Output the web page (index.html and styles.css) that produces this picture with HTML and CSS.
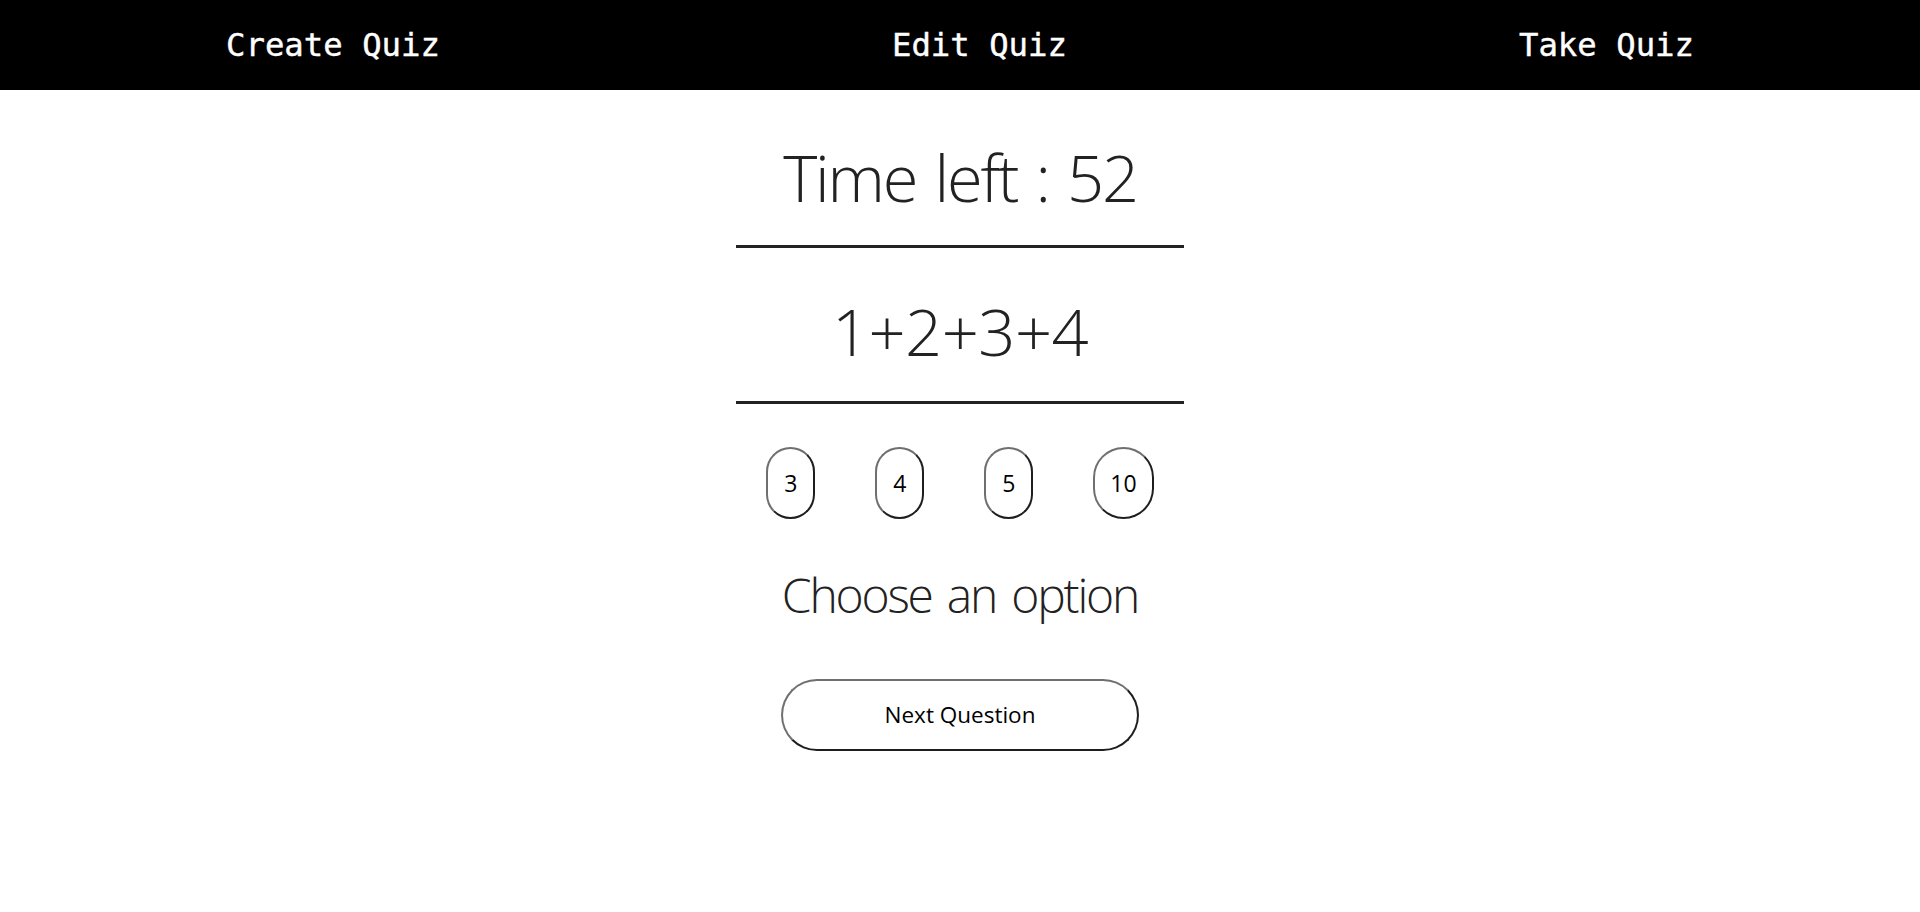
FILE: index.html
```html
<!DOCTYPE html>
<html lang="en">
<head>
<meta charset="utf-8">
<title>Take Quiz</title>
<link rel="stylesheet" href="styles.css">
</head>
<body>
<nav class="nav">
  <a class="nav-link" href="#">Create Quiz</a>
  <a class="nav-link" href="#">Edit Quiz</a>
  <a class="nav-link" href="#">Take Quiz</a>
</nav>
<main class="quiz">
  <h1 class="timer">Time left : 52</h1>
  <h1 class="question">1+2+3+4</h1>
  <div class="options">
    <button class="option">3</button>
    <button class="option">4</button>
    <button class="option">5</button>
    <button class="option">10</button>
  </div>
  <p class="status">Choose an option</p>
  <button class="next">Next Question</button>
</main>
</body>
</html>
```

FILE: styles.css
```css
html, body {
  margin: 0;
  padding: 0;
  background: #fff;
}

body {
  font-family: "Open Sans", "Noto Sans", sans-serif;
  color: #222;
}

.nav {
  height: 90px;
  background: #000;
  display: flex;
  justify-content: space-around;
  align-items: center;
}

.nav-link {
  font-family: "DejaVu Sans Mono", "Liberation Mono", monospace;
  font-size: 32.3px;
  line-height: 38px;
  color: #fff;
  text-decoration: none;
  -webkit-text-stroke: 0.4px #fff;
}

.quiz {
  width: 448px;
  margin: 0 auto;
  display: flex;
  flex-direction: column;
  align-items: center;
}

.timer,
.question {
  width: 100%;
  margin: 0;
  font-size: 65px;
  font-weight: 300;
  line-height: 78px;
  text-align: center;
  border-bottom: 3.5px solid #222;
}

.timer {
  margin-top: 47.5px;
  padding-bottom: 29.5px;
  letter-spacing: -2.2px;
  word-spacing: 3.5px;
}

.question {
  margin-top: 44px;
  padding-bottom: 30.5px;
  letter-spacing: -0.5px;
}

.options {
  display: flex;
  gap: 60px;
  margin-top: 43px;
}

.option,
.next {
  font-family: "Open Sans", "Noto Sans", sans-serif;
  color: #000;
  background: #fff;
  border: 2.5px solid;
  border-color: #6f6f6f #1e1e1e #1e1e1e #6f6f6f;
  border-radius: 40px;
  cursor: pointer;
}

.option {
  font-size: 23px;
  height: 72px;
  min-width: 49px;
  padding: 0 15px;
  line-height: 30px;
}

.status {
  margin: 47px 0 0;
  font-size: 48px;
  font-weight: 300;
  line-height: 58px;
  letter-spacing: -2.2px;
  word-spacing: 4.8px;
}

.next {
  font-size: 22.5px;
  margin-top: 55px;
  width: 358px;
  height: 72px;
  padding: 0;
}
```
